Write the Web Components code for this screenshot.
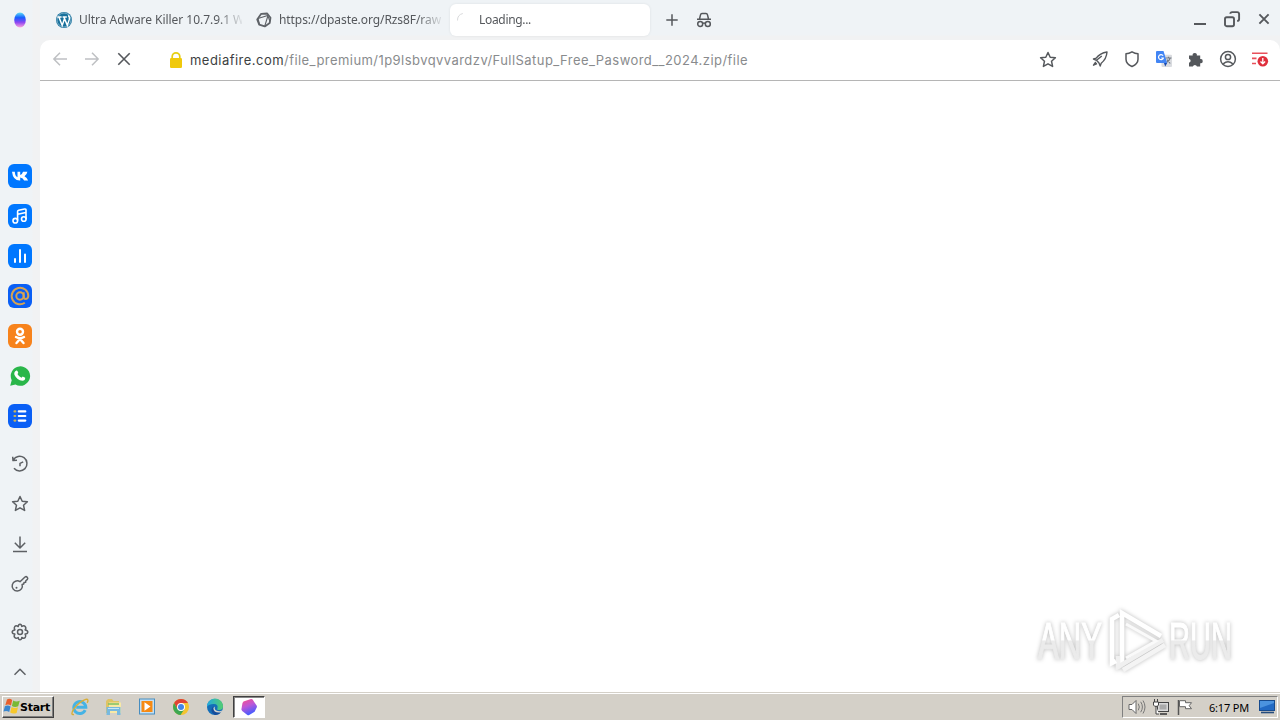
<!DOCTYPE html>
<html lang="en">
<head>
<meta charset="utf-8">
<title>Loading...</title>
<style>
  html, body { margin: 0; height: 720px; overflow: hidden; background: #fff; }
</style>
</head>
<body>
<desktop-screen></desktop-screen>
<script>
const html = String.raw
const css = String.raw

// All glyphs are drawn on a box as large as they are shown
const icons = {
  logo: [16, html`<defs><linearGradient id="g" x2="0" y2="1"><stop offset="0" stop-color="#5fe0f5"/><stop offset=".35" stop-color="#175cff"/><stop offset=".65" stop-color="#8b45f2"/><stop offset="1" stop-color="#ffa5dc"/></linearGradient></defs><ellipse cx="8" cy="8" rx="5.8" ry="7.6" fill="url(#g)" style="filter: blur(.6px)"/>`],
  wordpress: [16, html`<circle cx="8" cy="8" r="8" fill="#17709c"/><circle cx="8" cy="8" r="7" fill="none" stroke="#b9d6e4" stroke-width=".6"/><path d="M1.4 5h4.2M3 5.2l3.2 8.2L8.4 7M6.6 5h4.2M8 5.2l3.3 8.2 2-6q.7-2.4-1-4" fill="none" stroke="#fff" stroke-width="1.5"/>`],
  dpaste: [16, html`<path d="M5.2 1.8l6-.3 3.3 4.2-.8 5.4-4.9 3.3-5.6-1.8-2-5.2z" fill="none" stroke="#5f6368" stroke-width="1.8" stroke-linejoin="round"/><path d="M2 6.5l9.8-3 2.2 6M12 3.5L8.8 14M3.5 12.3L2 6.500" fill="none" stroke="#5f6368" stroke-width="1.1"/>`],
  spinner: [16, html`<path d="M1.5 8.5A7 7 0 0 1 6.8 1.5" fill="none" stroke="#d9dadc" stroke-width="1"/>`],
  plus: [16, html`<path d="M8 2.3v11.4M2.3 8h11.4"/>`],
  incognito: [16, html`<path d="M1 7.3h14M3.5 7l1-4.2q.3-1.3 1.5-1.3h4q1.2 0 1.5 1.3l1 4.2M6.8 11.5q1.2-.8 2.4 0" /><circle cx="4.2" cy="11.9" r="2.5"/><circle cx="11.8" cy="11.9" r="2.5"/>`],
  minimize: [16, html`<path d="M2 13h12" stroke-width="2"/>`],
  restore: [16, html`<rect x="1" y="6.2" width="9" height="9" rx="1.7" stroke-width="1.9"/><path d="M6.3 2.8q.1-1.7 1.8-1.7h5q2 0 2 2v4.8q0 2-2 2" stroke-width="1.9"/>`],
  close: [16, html`<path d="M3.4 3.4l9.2 9.2M12.6 3.4l-9.2 9.2" stroke-width="1.9"/>`],
  back: [16, html`<path d="M15 8H2M8 1.8L1.8 8 8 14.2"/>`],
  forward: [16, html`<path d="M1 8h13M8 1.8L14.2 8 8 14.2"/>`],
  stop: [16, html`<path d="M2.3 2.3l11.4 11.4M13.7 2.3L2.3 13.7" stroke-width="1.6"/>`],
  lock: [16, html`<path d="M4.2 7V4.6a3.8 3.8 0 0 1 7.6 0V7" stroke="#e6cf14" stroke-width="1.7"/><rect x="2" y="6" width="12" height="10" rx="1.2" fill="#f0c90c" stroke="none"/>`],
  star: [18, html`<path d="M9 1.5l2.2 4.7 5.2.5-3.9 3.5 1.1 5.2L9 12.8l-4.6 2.6 1.1-5.2-3.9-3.5 5.2-.5z"/>`],
  rocket: [16, html`<path d="M15 1Q8 2 4.2 7.2L1.5 8l3 1.3L7 12l1.2 3 1-2.8Q14.5 8 15 1zM4.5 9.3L9.8 5M3.8 11l-2.3 3.2 3.5-1.7" stroke-width="1.4"/>`],
  shield: [16, html`<path d="M8 .8Q11 2.5 14 2.7v5.6q0 4.7-6 7.2-6-2.5-6-7.2V2.7Q5 2.5 8 .8z"/>`],
  translate: [16, html`<rect x="5.5" y="3.7" width="10.5" height="12.3" rx="1" fill="#dadce0" stroke="none"/><path d="M9.5 7h6M12.5 5.8V7M14.2 7q-1 3-3.7 4.6M11 8.5l3.2 4" stroke="#747b85" stroke-width="1.2"/><path d="M1 0h6.5l3.7 12H1q-1 0-1-1V1q0-1 1-1z" fill="#4285f4" stroke="none"/><path d="M8 12h3.2l-2 3.5z" fill="#1849ad" stroke="none"/><path d="M7.1 4.7A2.5 2.5 0 1 0 7.4 7H5.2" stroke="#fff" stroke-width="1.2"/>`],
  puzzle: [16, html`<path d="M1 4.5h3.7a2.1 2.1 0 1 1 4.1 0h3.4v3.6a2.1 2.1 0 1 1 0 4.1v3.3H9a2.2 2.2 0 0 0-4.2 0H1v-3.7a2.1 2.1 0 0 0 0-4.1z" fill="#54575b" stroke="none"/>`],
  account: [16, html`<circle cx="8" cy="8" r="7.4"/><circle cx="8" cy="6" r="2.6"/><path d="M3.2 12.8q4.8-4 9.6 0"/>`],
  downloads: [16, html`<path d="M0 2.2h15.500M0 7.4h4.5M0 12.5h4" stroke="#e8505b" stroke-width="1.6"/><circle cx="10.8" cy="10.3" r="5.3" fill="#df2f3c" stroke="none"/><path d="M10.8 7v5.7M8.5 10.5l2.3 2.3 2.3-2.3" stroke="#fff" stroke-width="1.3"/>`],
  vk: [24, html`<rect width="24" height="24" rx="6" fill="#07f"/><path d="M4 7.8h2.8q.3 4.7 2.7 5.4V7.8h2.7v3.3q2-.3 2.8-3.3h4.400q-.5 2.800-2.900 4.400 2.500 1.300 3.600 4.300h-4q-.9-2.600-3.900-3.100v3.100Q5 16.800 4 7.800z" fill="#fff"/>`],
  music: [24, html`<rect width="24" height="24" rx="6" fill="#07f"/><g fill="none" stroke="#fff" stroke-width="1.6"><circle cx="7.3" cy="16.7" r="2.3"/><circle cx="15.8" cy="15" r="2.3"/><path d="M9.6 16.5V7.5q0-1 1-1.2l6-1.3q1.4-.2 1.4 1v9M9.8 10.2l8-1.7"/></g>`],
  bars: [24, html`<rect width="24" height="24" rx="6" fill="#07f"/><path d="M7 15v3M12 6v12M17 10.5V18" fill="none" stroke="#fff" stroke-width="2" stroke-linecap="round"/>`],
  mail: [24, html`<rect width="24" height="24" rx="6" fill="#0a5ff5"/><g fill="none" stroke="#d6a353" stroke-width="2"><circle cx="12" cy="12" r="3.7"/><path d="M15.7 8.3v4.4q0 2.3 2.2 2.3 2.2-.2 2.4-3A8.3 8.3 0 1 0 16.8 18.8"/></g>`],
  ok: [24, html`<rect width="24" height="24" rx="6" fill="#f7831c"/><g fill="none" stroke="#fff" stroke-width="2.4" stroke-linecap="round"><circle cx="12" cy="7.7" r="3"/><path d="M8 13q4 2.4 8 0M12 15l-3.5 4M12 15l3.5 4"/></g>`],
  whatsapp: [24, html`<path d="M2.2 21.8l1.5-5.5A9.7 9.7 0 1 1 7.5 20.4z" fill="#29b64a"/><path d="M8.4 6.5q.8-.3 1.2.7l.6 1.4q.2.5-.8 1.5 1.5 2.7 4.1 3.7l1.2-1.3 2.5 1.2q.1 2.9-2.8 3-5.5-.5-8-6-.7-3 2-4.2z" fill="#fff"/>`],
  list: [24, html`<rect width="24" height="24" rx="6" fill="#0a5ff5"/><path d="M10.8 7.4h6.5M10.8 12h6.5M10.8 16.6h6.5" stroke="#fff" stroke-width="2.2" stroke-linecap="round"/><path d="M6.5 7.4h.8M6.5 12h.8M6.5 16.6h.8" stroke="#c8b35c" stroke-width="2.2" stroke-linecap="round"/>`],
  history: [18, html`<path d="M2.3 5A7.3 7.3 0 1 1 3 13.2M1.7 1.7L2 5.6l4-.4M12.2 6.8L9 8.4v2.8"/>`],
  download: [18, html`<path d="M9 1.5v11.2M3.8 7.8L9 13l5.2-5.2M2 16.4h14"/>`],
  key: [18, html`<path d="M9 6.7l5-4.7q1.2-.8 2.2.2 1 1.1.2 2.2l-1.6 1.4-.2 1.5-1.6.3-.3 1.400-1.600.4a5.1 5.1 0 1 1-2.100-2.700z"/><circle cx="5.5" cy="12.7" r="1" fill="currentColor" stroke="none"/>`],
  // eight lobes, one per 45 degrees
  gear: [18, html`<path d="M7.200 3.500Q7.400 1.200 9 1.200T10.800 3.500Q12.900 2 14.200 3.400T14.100 6.900Q16.800 7.200 16.800 9T14.100 11.100Q15.400 13.300 14.200 14.600T10.800 14.500Q10.600 16.800 9 16.800T7.200 14.500Q5.100 16 3.800 14.600T3.900 11.100Q1.200 10.800 1.200 9T3.900 6.900Q2.600 4.700 3.800 3.400T7.200 3.500z"/><circle cx="9" cy="9" r="2.500"/>`],
  chevron: [18, html`<path d="M3.5 11.8L9 6.3l5.5 5.5"/>`],
  windows: [16, html`<path d="M3 .5Q5.500-1 8.200 1L7 6.400Q4.200 4.800 1.300 6.200z" fill="#e8602d"/><path d="M9.200 1.500Q12 3.400 15.800 1.800l-1.600 5.400Q10.800 8.800 7.900 6.900z" fill="#79b935"/><path d="M.9 7.300q2.900-1.500 5.700.2L5.200 13Q2.600 11.400-.5 12.600z" fill="#3a87cf"/><path d="M7.600 8.100q3.100 1.600 6.400.2L12.600 13.900q-3.400 1.300-6.400-.3z" fill="#f7c82c"/>`],
  ie: [18, html`<path d="M14.2 12.2a6 6 0 1 1 .6-3H5.2" fill="none" stroke="#45b3e5" stroke-width="3"/><path d="M3 16.5Q-1.2 17.3 3 10.7 8 3.7 14.7 1.4q3.6-.6 1.5 3.4" fill="none" stroke="#d9ae36" stroke-width="1.4"/>`],
  explorer: [18, html`<path d="M1 3l2-2h4l1.5 2H14v12H1z" fill="#dfc465"/><path d="M4 4.5h12V15H4z" fill="#f8e9a5"/><path d="M3 6h11" stroke="#7fc160" stroke-width="1.5"/><path d="M1.5 9h14v8h-3.5v-4H5v4H1.5z" fill="#78b9df"/><path d="M3 10.5h11" stroke="#c7e7f5"/>`],
  player: [18, html`<rect x=".5" y="1" width="15" height="15" fill="#c4e0f4" stroke="#478dc0"/><rect x="2.5" y="3" width="11" height="11" fill="#f68a13"/><path d="M5.5 4.3L11.5 8.5l-6 4.2z" fill="#fff"/>`],
  chrome: [18, html`<circle cx="9" cy="9" r="8" fill="#f4c430"/><path d="M2.1 5A8 8 0 0 1 16 5H9L5.5 11z" fill="#df4336"/><path d="M2.1 5A8 8 0 0 0 8.5 17l4-6H5.5z" fill="#3da752"/><circle cx="9" cy="9" r="4" fill="#fff"/><circle cx="9" cy="9" r="3" fill="#4285e8"/>`],
  edge: [18, html`<defs><linearGradient id="e"><stop stop-color="#23a9df"/><stop offset="1" stop-color="#54ce70"/></linearGradient></defs><circle cx="9" cy="9" r="8" fill="#146eb8"/><path d="M1 8.8A8 8 0 0 1 17 8q.1 4.6-5 3.9-1.6-.4-.6-1.4Q12.5 6.2 8 6 3.3 5.8 1 8.8z" fill="url(#e)"/><path d="M7.2 8.3q-.8 6.5 7.8 5.9-2.4 3.3-6.6 2.6-5.2-3.5-1.2-8.5z" fill="#164d9b"/><path d="M9 8.6q-1.6 4.2 4.2 4.6 2.1 0 3.2-1l-1.1 2.2Q7.5 15.5 7.4 10z" fill="#d6d2cb"/>`],
  hexagon: [18, html`<defs><linearGradient id="h" x2=".4" y2="1"><stop stop-color="#ff4f84"/><stop offset=".5" stop-color="#bd57d6"/><stop offset="1" stop-color="#465cff"/></linearGradient></defs><path d="M3.500 3.500L11 1q1-.2 1.600.6l4 6q.5.800.2 1.700l-2.200 4.500-5.400 3.200q-1 .4-1.800-.1l-5.200-4q-.8-.8-.8-1.700L2.500 5z" fill="url(#h)"/>`],
  speaker: [18, html`<path d="M1 6.5h3l4-4v13l-4-4H1z" fill="#fff" stroke="#666"/><path d="M10.3 5.7q2 3.3 0 6.6M12.7 3.8q3.4 5.2 0 10.4M15 2.5q4 6.5 0 13" fill="none" stroke="#777"/>`],
  network: [18, html`<rect x="5.5" y="4.5" width="11" height="9" fill="#d9d9d9" stroke="#444"/><rect x="7.5" y="6.5" width="7" height="5" fill="#aaa"/><path d="M8 16h7" stroke="#444" stroke-width="1.7"/><path d="M2.5 1v3M5.5 1v3M1.5 4h5v3l-1.2 1.3H2.7L1.5 7zM4 8v8h3" fill="#fff" stroke="#444"/>`],
  flag: [18, html`<path d="M2.5 2v15" stroke="#555" stroke-width="1.5"/><path d="M3.500 2.700h6v2h6l-2.300 3 2.300 3H9.500v-2h-6z" fill="#fff" stroke="#666"/>`],
  desktop: [18, html`<rect x="2.500" y="2.500" width="15" height="10" fill="#226ac4" stroke="#174b8e"/><path d="M3 3h14v2L3 10z" fill="#4b93df"/><path d="M4 14.500h13" stroke="#254c7c" stroke-width="1.600"/>`]
}

class UiIcon extends HTMLElement {
  constructor() {
    super()
    this.attachShadow({ mode: 'open' })
  }

  connectedCallback() {
    const name = this.getAttribute('name')
    const [size, shape] = icons[name]
    const filled = this.hasAttribute('filled')
    const paint = filled ? '' : 'fill="none" stroke="currentColor" stroke-width="1.5" stroke-linejoin="round"'
    this.shadowRoot.innerHTML = html`
      <style>
        :host { display: block; flex: none; width: ${size}px; height: ${size}px; }
        svg { display: block; overflow: visible; }
      </style>
      <svg width="${size}" height="${size}" viewBox="0 0 ${size} ${size}" ${paint}>${shape}</svg>`
  }
}

// A line of text spaced so that it takes a given width
class TextRun extends HTMLElement {
  constructor() {
    super()
    this.attachShadow({ mode: 'open' }).innerHTML = html`
      <style>
        :host { display: inline-block; white-space: nowrap; }
      </style>
      <slot></slot>`
  }

  connectedCallback() {
    const width = Number(this.getAttribute('width'))
    const natural = this.getBoundingClientRect().width
    this.style.letterSpacing = (width - natural) / this.textContent.length + 'px'
  }
}

function define(name, style, template) {
  customElements.define(name, class extends HTMLElement {
    constructor() {
      super()
      const root = this.attachShadow({ mode: 'open' })
      root.innerHTML = `<style>${style}</style>${template}`
    }
  })
}

customElements.define('ui-icon', UiIcon)

define('side-bar', css`
  :host { display: flex; flex-direction: column; width: 40px; color: #5d6064; background: linear-gradient(90deg, #eff3f6 32px, #f1f2f3 33px); }
  ui-icon { margin: auto; }
  div { display: grid; height: 40px; }
  .apps { display: block; height: auto; margin-top: auto; }
  .tools, .foot { display: block; height: auto; margin-top: 8px; }
`, html`
  <div><ui-icon name="logo" filled></ui-icon></div>
  <div class="apps">
    <div><ui-icon name="vk" filled></ui-icon></div>
    <div><ui-icon name="music" filled></ui-icon></div>
    <div><ui-icon name="bars" filled></ui-icon></div>
    <div><ui-icon name="mail" filled></ui-icon></div>
    <div><ui-icon name="ok" filled></ui-icon></div>
    <div><ui-icon name="whatsapp" filled></ui-icon></div>
    <div><ui-icon name="list" filled></ui-icon></div>
  </div>
  <div class="tools">
    <div><ui-icon name="history"></ui-icon></div>
    <div><ui-icon name="star"></ui-icon></div>
    <div><ui-icon name="download"></ui-icon></div>
    <div><ui-icon name="key"></ui-icon></div>
  </div>
  <div class="foot">
    <div><ui-icon name="gear"></ui-icon></div>
    <div><ui-icon name="chevron"></ui-icon></div>
  </div>
`)

define('browser-tab', css`
  :host { display: flex; align-items: center; box-sizing: border-box; width: 200px; height: 32px; padding: 0 6px 0 8px; gap: 7px; border-radius: 6px; overflow: hidden; }
  :host([active]) { background: #fff; box-shadow: 0 0 3px rgb(0, 0, 0, 8%); margin-left: 2px; padding-left: 6px; }
  .title { overflow: hidden; width: 163px; line-height: 18px; white-space: nowrap; -webkit-mask-image: linear-gradient(90deg, #000 138px, transparent 166px); mask-image: linear-gradient(90deg, #000 138px, transparent 166px); }
`, html`
  <slot name="icon"></slot>
  <div class="title"><slot></slot></div>
`)

define('tab-strip', css`
  :host { display: flex; align-items: center; height: 40px; padding-left: 8px; color: #55585c; font: 12px "Noto Sans", sans-serif; background: linear-gradient(#eff3f6 35px, #f1f2f3 36px); }
  .action { display: grid; place-items: center; width: 32px; }
  .action:first-of-type { margin-left: 6px; }
  .controls { display: flex; gap: 16px; margin-left: auto; padding-right: 8px; }
  .controls ui-icon { margin-top: -2px; }
`, html`
  <browser-tab><ui-icon slot="icon" name="wordpress" filled></ui-icon><text-run width="151">Ultra Adware Killer 10.7.9.1</text-run> W</browser-tab>
  <browser-tab><ui-icon slot="icon" name="dpaste" filled></ui-icon><text-run width="162">https://dpaste.org/Rzs8F/raw</text-run></browser-tab>
  <browser-tab active><ui-icon slot="icon" name="spinner"></ui-icon><text-run width="52">Loading...</text-run></browser-tab>
  <div class="action"><ui-icon name="plus"></ui-icon></div>
  <div class="action"><ui-icon name="incognito"></ui-icon></div>
  <div class="controls">
    <ui-icon name="minimize"></ui-icon>
    <ui-icon name="restore"></ui-icon>
    <ui-icon name="close"></ui-icon>
  </div>
`)

define('address-bar', css`
  :host { display: flex; align-items: center; box-sizing: border-box; height: 41px; padding: 0 12px; border-bottom: 1px solid #b5b5b5; border-radius: 10px 10px 0 0; background: #fff; color: #55585c; }
  .nav { display: flex; gap: 16px; margin-top: -2px; }
  .off { color: #bec0c3; }
  .url { display: flex; align-items: center; margin-left: 36px; font: 13px/20px Inter, sans-serif; color: #898b8d; }
  .url ui-icon { margin-right: 6px; }
  .host { color: #3d3f42; }
  .actions { display: flex; align-items: center; gap: 16px; margin-left: auto; margin-top: -2px; }
  .bookmark { margin-right: 19px; margin-top: 1px; }
`, html`
  <div class="nav">
    <ui-icon class="off" name="back"></ui-icon>
    <ui-icon class="off" name="forward"></ui-icon>
    <ui-icon name="stop"></ui-icon>
  </div>
  <div class="url">
    <ui-icon name="lock"></ui-icon>
    <text-run class="host" width="94">mediafire.com</text-run>
    <text-run width="464">/file_premium/1p9lsbvqvvardzv/FullSatup_Free_Pasword__2024.zip/file</text-run>
  </div>
  <div class="actions">
    <ui-icon class="bookmark" name="star"></ui-icon>
    <ui-icon name="rocket"></ui-icon>
    <ui-icon name="shield"></ui-icon>
    <ui-icon name="translate"></ui-icon>
    <ui-icon name="puzzle"></ui-icon>
    <ui-icon name="account"></ui-icon>
    <ui-icon name="downloads"></ui-icon>
  </div>
`)

define('water-mark', css`
  :host { display: block; width: 230px; height: 90px; }
  svg { display: block; filter: drop-shadow(0 0 2px rgb(0, 0, 0, 27%)); }
  text { font: 47px "Liberation Sans Narrow", "Liberation Sans", sans-serif; }
`, html`
  <svg width="230" height="90" viewBox="0 0 230 90">
    <defs><linearGradient id="fade" gradientUnits="userSpaceOnUse" x1="0" y1="-36" x2="0" y2="0"><stop offset=".52" stop-color="#fff"/><stop offset=".56" stop-color="#ebebeb"/></linearGradient></defs>
    <g fill="url(#fade)" stroke="url(#fade)" stroke-width="1">
      <text transform="translate(8 59) scale(1 1.12)" textLength="64" lengthAdjust="spacingAndGlyphs">ANY</text>
      <text transform="translate(139 59) scale(1 1.12)" textLength="63" lengthAdjust="spacingAndGlyphs">RUN</text>
    </g>
    <g fill="none" stroke-width="4.6">
      <path d="M92 64V13L131 36" stroke="#fff"/>
      <path d="M133 40L88 67V56" stroke="#f0f0f0"/>
      <path d="M89 15L82 19V63L86 61" stroke="#fff"/>
      <path d="M93 70L135 45" stroke="#f4f4f4"/>
      <path d="M96 24L126 41 96 58" stroke="#fafafa" stroke-width="3"/>
    </g>
  </svg>
`)

define('task-button', css`
  :host { display: grid; place-items: center; box-sizing: border-box; width: 32px; height: 22px; margin-right: 1.8px; }
  :host([active]) { background: #fff; border: 1px solid; border-color: #404040 #fff #fff #404040; box-shadow: inset 1px 1px #888; }
`, html`<slot></slot>`)

define('task-bar', css`
  :host { display: flex; align-items: center; box-sizing: border-box; height: 28px; padding: 2px 2px 0; color: #000; background: linear-gradient(#d4d0c8 1px, #fff 1px 2px, #d4d0c8 2px); }
  .start { display: flex; align-items: center; box-sizing: border-box; width: 52px; height: 22px; padding-left: 1px; border: 1px solid; border-color: #fff #404040 #404040 #fff; box-shadow: inset -1px -1px #808080; font: bold 11px "DejaVu Sans", sans-serif; }
  .pinned { display: flex; margin-left: 10px; }
  .tray { display: flex; align-items: center; box-sizing: border-box; width: 156px; height: 22px; margin-left: auto; padding-left: 5px; gap: 6px; border: 1px solid; border-color: #808080 #fff #fff #808080; font: 11px "Noto Sans", sans-serif; }
  .clock { margin: 0 2px 0 9px; }
`, html`
  <div class="start"><ui-icon name="windows" filled></ui-icon><text-run width="30">Start</text-run></div>
  <div class="pinned">
    <task-button><ui-icon name="ie" filled></ui-icon></task-button>
    <task-button><ui-icon name="explorer" filled></ui-icon></task-button>
    <task-button><ui-icon name="player" filled></ui-icon></task-button>
    <task-button><ui-icon name="chrome" filled></ui-icon></task-button>
    <task-button><ui-icon name="edge" filled></ui-icon></task-button>
    <task-button active><ui-icon name="hexagon" filled></ui-icon></task-button>
  </div>
  <div class="tray">
    <ui-icon name="speaker" filled></ui-icon>
    <ui-icon name="network" filled></ui-icon>
    <ui-icon name="flag" filled></ui-icon>
    <text-run class="clock" width="40">6:17 PM</text-run>
    <ui-icon name="desktop" filled></ui-icon>
  </div>
`)

define('desktop-screen', css`
  :host { display: grid; grid-template: 692px 28px / 1280px; position: relative; width: 1280px; height: 720px; }
  .window { display: grid; grid-template-columns: 40px 1fr; }
  .view { display: grid; grid-template-rows: 40px 41px 1fr; background: #f1f2f3; }
  main { background: #fff; }
  water-mark { position: absolute; right: 20px; bottom: 30px; pointer-events: none; }
`, html`
  <div class="window">
    <side-bar></side-bar>
    <div class="view">
      <tab-strip></tab-strip>
      <address-bar></address-bar>
      <main></main>
    </div>
  </div>
  <task-bar></task-bar>
  <water-mark></water-mark>
`)

// Last, since its width is measured where it stands
customElements.define('text-run', TextRun)
</script>
</body>
</html>
